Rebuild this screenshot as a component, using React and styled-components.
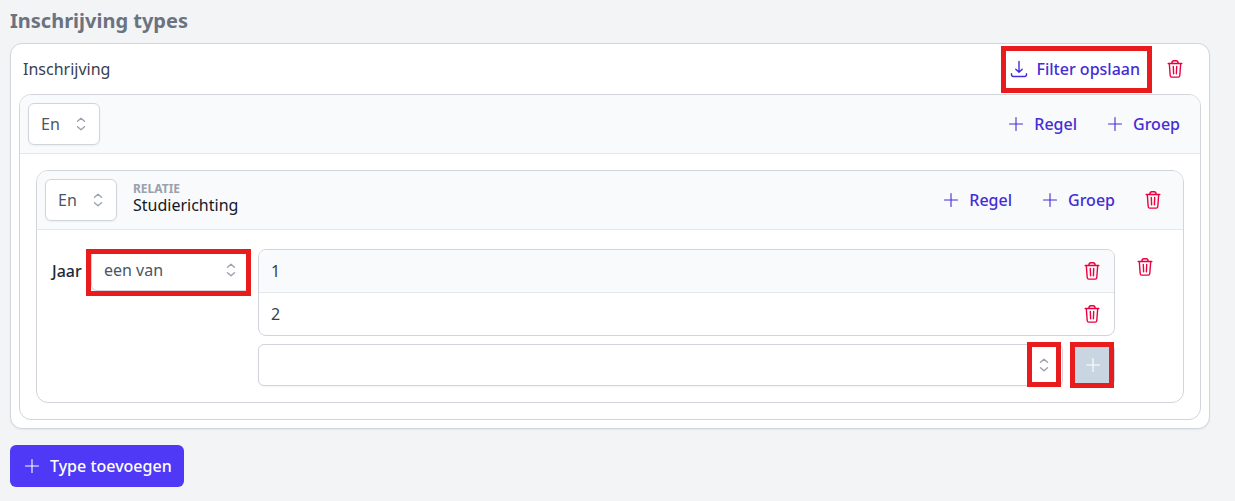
import React, { useState } from 'react';
import styled, { createGlobalStyle, css } from 'styled-components';

const TrashIcon = () => (
  <Icon viewBox="0 0 20 20" aria-hidden="true">
    <path d="M3.200 4.500h13.600M4.300 4.500l.9 12c.1 1 .7 1.600 1.600 1.600h6.400c.9 0 1.500-.6 1.600-1.600l.9-12M6.800 4.300C7 2.500 7.800 1.800 8.800 1.800h2.400c1 0 1.800.7 2 2.500M8.300 7.500l.3 7.200M11.700 7.500l-.3 7.200" />
  </Icon>
);

const SaveIcon = () => (
  <Icon viewBox="0 0 20 20" aria-hidden="true">
    <path d="M10 2.500v10.800M6.800 10.200L10 13.300l3.200-3.100M2.500 14.800v.7c0 1.200.8 2 2 2h11c1.200 0 2-.8 2-2v-.7" />
  </Icon>
);

const PlusIcon = () => (
  <Icon $stroke={1.1} viewBox="0 0 20 20" aria-hidden="true">
    <path d="M10 3.500v13M3.500 10h13" />
  </Icon>
);

const SelectorIcon = () => (
  <Icon viewBox="0 0 20 20" aria-hidden="true">
    <path d="M6.500 7.300L10 4.300l3.500 3M6.500 12.700l3.500 3 3.500-3" />
  </Icon>
);

const Select = ({ label, options, width, marked }) => (
  <SelectWrapper $width={width} $marked={marked}>
    <select aria-label={label} defaultValue={options[0]}>
      {options.map((option) => (
        <option key={option}>{option}</option>
      ))}
    </select>
    <SelectorIcon />
  </SelectWrapper>
);

const AddActions = () => (
  <>
    <LinkButton type="button"><PlusIcon />Regel</LinkButton>
    <LinkButton type="button"><PlusIcon />Groep</LinkButton>
  </>
);

const App = () => {
  const [years, setYears] = useState(['1', '2']);

  const removeYear = (year) => {
    setYears((current) => current.filter((item) => item !== year));
  };

  return (
    <Page>
      <GlobalStyle />
      <Title>Inschrijving types</Title>
      <TypeCard>
        <TypeHeader>
          <TypeName>Inschrijving</TypeName>
          <SaveButton type="button"><SaveIcon />Filter opslaan</SaveButton>
          <TrashButton type="button" aria-label="Type verwijderen"><TrashIcon /></TrashButton>
        </TypeHeader>
        <Group>
          <GroupHeader>
            <Select label="Operator" options={['En', 'Of']} width={72} />
            <Actions><AddActions /></Actions>
          </GroupHeader>
          <GroupBody>
            <Group>
              <GroupHeader>
                <Select label="Operator relatie" options={['En', 'Of']} width={72} />
                <Relation>
                  <small>Relatie</small>
                  <span>Studierichting</span>
                </Relation>
                <Actions>
                  <AddActions />
                  <TrashButton type="button" aria-label="Groep verwijderen"><TrashIcon /></TrashButton>
                </Actions>
              </GroupHeader>
              <RuleBody>
                <RuleName>Jaar</RuleName>
                <Select label="Jaar vergelijking" options={['een van', 'geen van']} width={159} marked />
                <Values>
                  <ValueList>
                    {years.map((year) => (
                      <li key={year}>
                        {year}
                        <TrashButton type="button" aria-label={`${year} verwijderen`} onClick={() => removeYear(year)}>
                          <TrashIcon />
                        </TrashButton>
                      </li>
                    ))}
                  </ValueList>
                  <NewValue>
                    <ValueSelect>
                      <select aria-label="Nieuwe waarde" defaultValue="">
                        <option value="" />
                        <option>3</option>
                      </select>
                      <SelectorIcon />
                    </ValueSelect>
                    <AddButton type="button" aria-label="Waarde toevoegen"><PlusIcon /></AddButton>
                  </NewValue>
                </Values>
                <TrashButton type="button" aria-label="Regel verwijderen"><TrashIcon /></TrashButton>
              </RuleBody>
            </Group>
          </GroupBody>
        </Group>
      </TypeCard>
      <PrimaryButton type="button"><PlusIcon />Type toevoegen</PrimaryButton>
    </Page>
  );
};

const GlobalStyle = createGlobalStyle`
  *, *::after {
    box-sizing: border-box;
  }

  body {
    margin: 0;
    background: #f3f4f6;
    color: #374151;
    font: 16px/24px 'Noto Sans', sans-serif;
  }

  button, select {
    font: inherit;
    color: inherit;
  }

  button {
    display: flex;
    align-items: center;
    padding: 0;
    border: 0;
    background: none;
    cursor: pointer;
  }
`;

const Icon = styled.svg`
  flex: none;
  width: 20px;
  height: 20px;
  fill: none;
  stroke: currentColor;
  stroke-width: ${({ $stroke }) => $stroke || 1.4};
  stroke-linecap: round;
  stroke-linejoin: round;
`;

/* red marker drawn over a control */
const marker = css`
  &::after {
    content: '';
    position: absolute;
    border: 5px solid #e81c1c;
    pointer-events: none;
  }
`;

const Page = styled.main`
  padding: 7px 25px 14px 10px;
`;

const Title = styled.h1`
  margin: 0 0 8px;
  font-size: 20px;
  line-height: 28px;
  font-weight: 700;
  color: #6b7280;
`;

const TypeCard = styled.section`
  padding: 0 8px 8px;
  border: 1px solid #d1d5db;
  border-radius: 12px;
  background: #fff;
  box-shadow: 0 1px 2px rgba(0, 0, 0, 0.06);
`;

const TypeHeader = styled.header`
  display: flex;
  align-items: center;
  height: 50px;
  padding: 0 16px 0 4px;
`;

const TypeName = styled.span`
  flex: 1;
`;

const LinkButton = styled.button`
  gap: 8px;
  color: #432dd7;
  font-weight: 500;
`;

const SaveButton = styled(LinkButton)`
  position: relative;
  margin-right: 25px;
  ${marker}

  &::after {
    inset: -11px -12px -12px -8px;
  }
`;

const TrashButton = styled.button`
  color: #ec003f;
`;

const Group = styled.div`
  border: 1px solid #d1d5db;
  border-radius: 12px;
`;

const GroupHeader = styled.div`
  display: flex;
  align-items: center;
  padding: 8px;
  border-bottom: 1px solid #e5e7eb;
  border-radius: 11px 11px 0 0;
  background: #f9fafb;
`;

const Actions = styled.div`
  display: flex;
  align-items: center;
  gap: 28px;
  margin-left: auto;
  padding-right: 12px;
`;

const GroupBody = styled.div`
  padding: 16px;
`;

const Relation = styled.div`
  display: flex;
  flex-direction: column;
  margin-left: 16px;
  color: #111827;
  line-height: 20px;

  small {
    color: #99a1af;
    font-size: 12px;
    line-height: 12px;
    font-weight: 700;
    text-transform: uppercase;
  }

  span {
    padding-bottom: 2px;
  }
`;

const SelectWrapper = styled.div`
  position: relative;
  flex: none;
  width: ${({ $width }) => $width}px;

  select {
    display: block;
    width: 100%;
    height: 42px;
    padding: 0 32px 0 12px;
    border: 1px solid #d1d5db;
    border-radius: 6px;
    background: #fff;
    color: #4b5563;
    appearance: none;
    box-shadow: 0 1px 2px rgba(0, 0, 0, 0.05);
  }

  svg {
    position: absolute;
    top: 11px;
    right: 9px;
    color: #99a1af;
    pointer-events: none;
  }

  ${({ $marked }) => $marked && css`
    ${marker}

    &::after {
      inset: 0 -1px -5px -5px;
    }
  `}
`;

const ValueSelect = styled(SelectWrapper)`
  flex: 1;
  ${marker}

  &::after {
    inset: -2px 2px -1px auto;
    width: 34px;
  }
`;

const RuleBody = styled.div`
  display: flex;
  align-items: flex-start;
  padding: 19px 28px 16px 15px;

  > ${TrashButton} {
    margin: 8px 0 0 20px;
  }
`;

const RuleName = styled.span`
  width: 39px;
  padding-top: 10px;
  color: #1f2937;
  font-weight: 500;
`;

const Values = styled.div`
  flex: 1;
  margin-left: 8px;
`;

const ValueList = styled.ul`
  margin: 0 0 8px;
  padding: 0;
  border: 1px solid #d1d5db;
  border-radius: 8px;
  list-style: none;

  li {
    display: flex;
    align-items: center;
    justify-content: space-between;
    height: 42px;
    padding: 0 12px;
  }

  li:first-child {
    height: 43px;
    border-bottom: 1px solid #e5e7eb;
    border-radius: 7px 7px 0 0;
    background: #f9fafb;
  }
`;

const NewValue = styled.div`
  display: flex;
  gap: 8px;
`;

const AddButton = styled.button`
  position: relative;
  justify-content: center;
  width: 44px;
  height: 42px;
  border-radius: 6px;
  background: #cad5e2;
  color: #fff;
  ${marker}

  &::after {
    inset: -2px 1px -2px -1px;
  }
`;

const PrimaryButton = styled.button`
  gap: 8px;
  height: 42px;
  margin-top: 16px;
  padding: 0 12px;
  border-radius: 6px;
  background: #4f39f6;
  color: #fff;
  font-weight: 500;
`;

export default App;
